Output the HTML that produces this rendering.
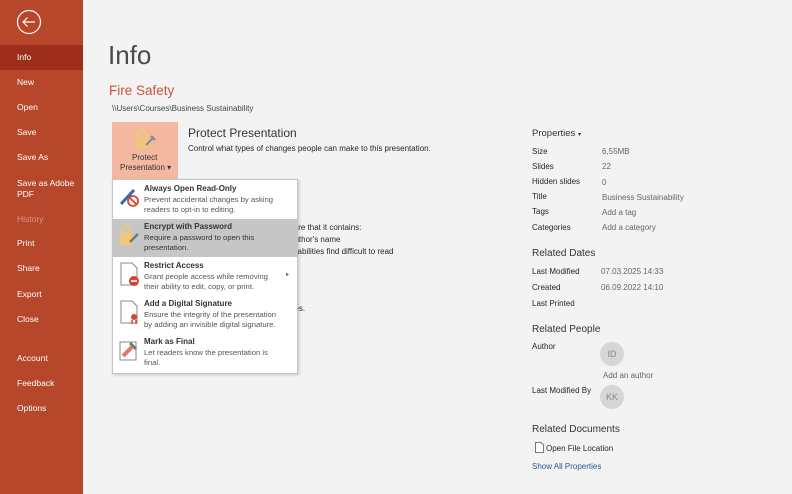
<!DOCTYPE html>
<html><head><meta charset="utf-8"><style>
*{margin:0;padding:0;box-sizing:border-box}
body{width:792px;height:494px;overflow:hidden;background:#f3f3f3;font-family:"Liberation Sans",sans-serif;color:#262626;position:relative}
.side{position:absolute;left:0;top:0;width:83px;height:494px;background:#b7472a}
.side div{position:absolute;left:17px;color:#fff;font-size:8.5px;line-height:11px}
.sel{position:absolute;left:0;top:45px;width:83px;height:25px;background:#9c2e1b}
.t{position:absolute;white-space:nowrap}
.s{font-size:8px}
.g{color:#666}
.menu{position:absolute;left:112px;top:179px;width:186px;height:195px;background:#fff;border:1px solid #c6c6c6;box-shadow:1px 1px 3px rgba(0,0,0,.2)}
.it{position:absolute;left:0;width:184px}
.it b{position:absolute;left:31px;font-size:8px;color:#333}
.it span{position:absolute;left:31px;font-size:7.7px;color:#555;line-height:10px}
</style></head><body>
<div class="side">
<svg style="position:absolute;left:16px;top:9px" width="26" height="26"><circle cx="13" cy="13" r="11.5" fill="none" stroke="#fff" stroke-width="1.2"/><path d="M7 13h12M11.5 8.5L7 13l4.5 4.5" fill="none" stroke="#fff" stroke-width="1.2"/></svg>
<div class="sel" style="left:0"></div>
<div style="top:52px">Info</div><div style="top:77px">New</div><div style="top:102px">Open</div><div style="top:127px">Save</div><div style="top:152px">Save As</div><div style="top:178px">Save as Adobe<br>PDF</div><div style="top:214px;color:#d99a8a">History</div><div style="top:238px">Print</div><div style="top:263px">Share</div><div style="top:289px">Export</div><div style="top:314px">Close</div><div style="top:353px">Account</div><div style="top:378px">Feedback</div><div style="top:403px">Options</div>
</div>
<div class="t" style="left:108px;top:40px;font-size:26px;color:#4a4a4a">Info</div>
<div class="t" style="left:109px;top:83px;font-size:13.5px;color:#c9553a">Fire Safety</div>
<div class="t s" style="left:112px;top:104px;color:#444">\\Users\Courses\Business Sustainability</div>
<div style="position:absolute;left:112px;top:122px;width:66px;height:58px;background:#f4b8a0"></div>
<svg style="position:absolute;left:133px;top:128px" width="26" height="24"><rect x="2" y="9" width="13" height="12" fill="#f0c878" opacity=".8"/><path d="M4 9V6a4.5 4.5 0 0 1 9 0v3" fill="none" stroke="#f0c878" stroke-width="2"/><path d="M13 17l8-8M18 8l4 4" stroke="#888" stroke-width="2"/></svg>
<div class="t s" style="left:132px;top:153px;color:#333">Protect</div>
<div class="t s" style="left:120px;top:163px;color:#333">Presentation ▾</div>
<div class="t" style="left:188px;top:126px;font-size:12px;color:#333">Protect Presentation</div>
<div class="t s" style="left:188px;top:144px">Control what types of changes people can make to this presentation.</div>
<div class="t s" style="left:288px;top:223px">ware that it contains:</div>
<div class="t s" style="left:290px;top:235px">author's name</div>
<div class="t s" style="left:290px;top:247px">lisabilities find difficult to read</div>
<div class="t" style="left:288px;top:283px;font-size:12px;color:#333">n</div>
<div class="t s" style="left:290px;top:304px">ges.</div>
<div class="menu">
<div class="it" style="top:2px;height:37px"><svg style="position:absolute;left:5px;top:4px" width="22" height="22"><path d="M3 18L16 4" stroke="#2f6bb5" stroke-width="3"/><circle cx="15" cy="15" r="5" fill="#fff" stroke="#d9432f" stroke-width="1.8"/><path d="M11.5 11.5l7 7" stroke="#d9432f" stroke-width="1.8"/></svg><b style="top:2px">Always Open Read-Only</b><span style="top:13px">Prevent accidental changes by asking<br>readers to opt-in to editing.</span></div>
<div class="it" style="top:39px;height:38px;background:#c6c6c6"><svg style="position:absolute;left:5px;top:5px" width="24" height="24"><rect x="2" y="9" width="12" height="12" fill="#f0c878"/><path d="M4 9V6a4 4 0 0 1 8 0v3" fill="none" stroke="#f0c878" stroke-width="2"/><path d="M12 18l8-8" stroke="#777" stroke-width="2.5"/></svg><b style="top:3px">Encrypt with Password</b><span style="top:14px;color:#333">Require a password to open this<br>presentation.</span></div>
<div class="it" style="top:78px;height:38px"><svg style="position:absolute;left:6px;top:4px" width="22" height="26"><path d="M2 1h11l5 5v17H2z" fill="#fff" stroke="#888"/><circle cx="15" cy="19" r="5" fill="#d9432f"/><path d="M12 19h6" stroke="#fff" stroke-width="1.6"/></svg><b style="top:3px">Restrict Access</b><span style="top:14px">Grant people access while removing<br>their ability to edit, copy, or print.</span><span style="left:173px;top:12px;font-size:6px">▸</span></div>
<div class="it" style="top:116px;height:38px"><svg style="position:absolute;left:6px;top:4px" width="22" height="26"><path d="M2 1h11l5 5v17H2z" fill="#fff" stroke="#888"/><circle cx="15" cy="17" r="3" fill="#d9432f"/><path d="M13 20v4M17 20v4" stroke="#d9432f" stroke-width="1.5"/></svg><b style="top:3px">Add a Digital Signature</b><span style="top:14px">Ensure the integrity of the presentation<br>by adding an invisible digital signature.</span></div>
<div class="it" style="top:154px;height:38px"><svg style="position:absolute;left:5px;top:4px" width="24" height="24"><rect x="2" y="4" width="16" height="18" fill="#fff" stroke="#888"/><path d="M5 18l9-9" stroke="#e07a5f" stroke-width="4"/><path d="M12 5l6 6" stroke="#777" stroke-width="3"/></svg><b style="top:3px">Mark as Final</b><span style="top:14px">Let readers know the presentation is<br>final.</span></div>
</div>
<div class="t" style="left:532px;top:128px;font-size:9.5px;color:#333">Properties <span style="font-size:6px">▾</span></div>
<div class="t s" style="left:532px;top:147px">Size</div><div class="t s g" style="left:602px;top:147px">6,55MB</div>
<div class="t s" style="left:532px;top:162px">Slides</div><div class="t s g" style="left:602px;top:162px">22</div>
<div class="t s" style="left:532px;top:177px">Hidden slides</div><div class="t s g" style="left:602px;top:178px">0</div>
<div class="t s" style="left:532px;top:192px">Title</div><div class="t s g" style="left:602px;top:193px">Business Sustainability</div>
<div class="t s" style="left:532px;top:207px">Tags</div><div class="t s g" style="left:602px;top:208px">Add a tag</div>
<div class="t s" style="left:532px;top:223px">Categories</div><div class="t s g" style="left:602px;top:223px">Add a category</div>
<div class="t" style="left:532px;top:248px;font-size:10px;color:#333">Related Dates</div>
<div class="t s" style="left:532px;top:267px">Last Modified</div><div class="t s g" style="left:601px;top:267px">07.03.2025 14:33</div>
<div class="t s" style="left:532px;top:283px">Created</div><div class="t s g" style="left:601px;top:283px">06.09.2022 14:10</div>
<div class="t s" style="left:532px;top:299px">Last Printed</div>
<div class="t" style="left:532px;top:324px;font-size:10px;color:#333">Related People</div>
<div class="t s" style="left:532px;top:342px">Author</div>
<div style="position:absolute;left:600px;top:342px;width:24px;height:24px;border-radius:50%;background:#d6d6d6;color:#888;font-size:9px;text-align:center;line-height:24px">ID</div>
<div class="t s g" style="left:603px;top:371px">Add an author</div>
<div class="t s" style="left:532px;top:386px">Last Modified By</div>
<div style="position:absolute;left:600px;top:385px;width:24px;height:24px;border-radius:50%;background:#d6d6d6;color:#888;font-size:9px;text-align:center;line-height:24px">KK</div>
<div class="t" style="left:532px;top:424px;font-size:10px;color:#333">Related Documents</div>
<svg style="position:absolute;left:535px;top:442px" width="9" height="11"><path d="M.5.5h5.5l2.5 2.5v7.5H.5z" fill="#fff" stroke="#777"/></svg>
<div class="t s" style="left:546px;top:444px">Open File Location</div>
<div class="t s" style="left:532px;top:462px;color:#2b5797">Show All Properties</div>
</body></html>
